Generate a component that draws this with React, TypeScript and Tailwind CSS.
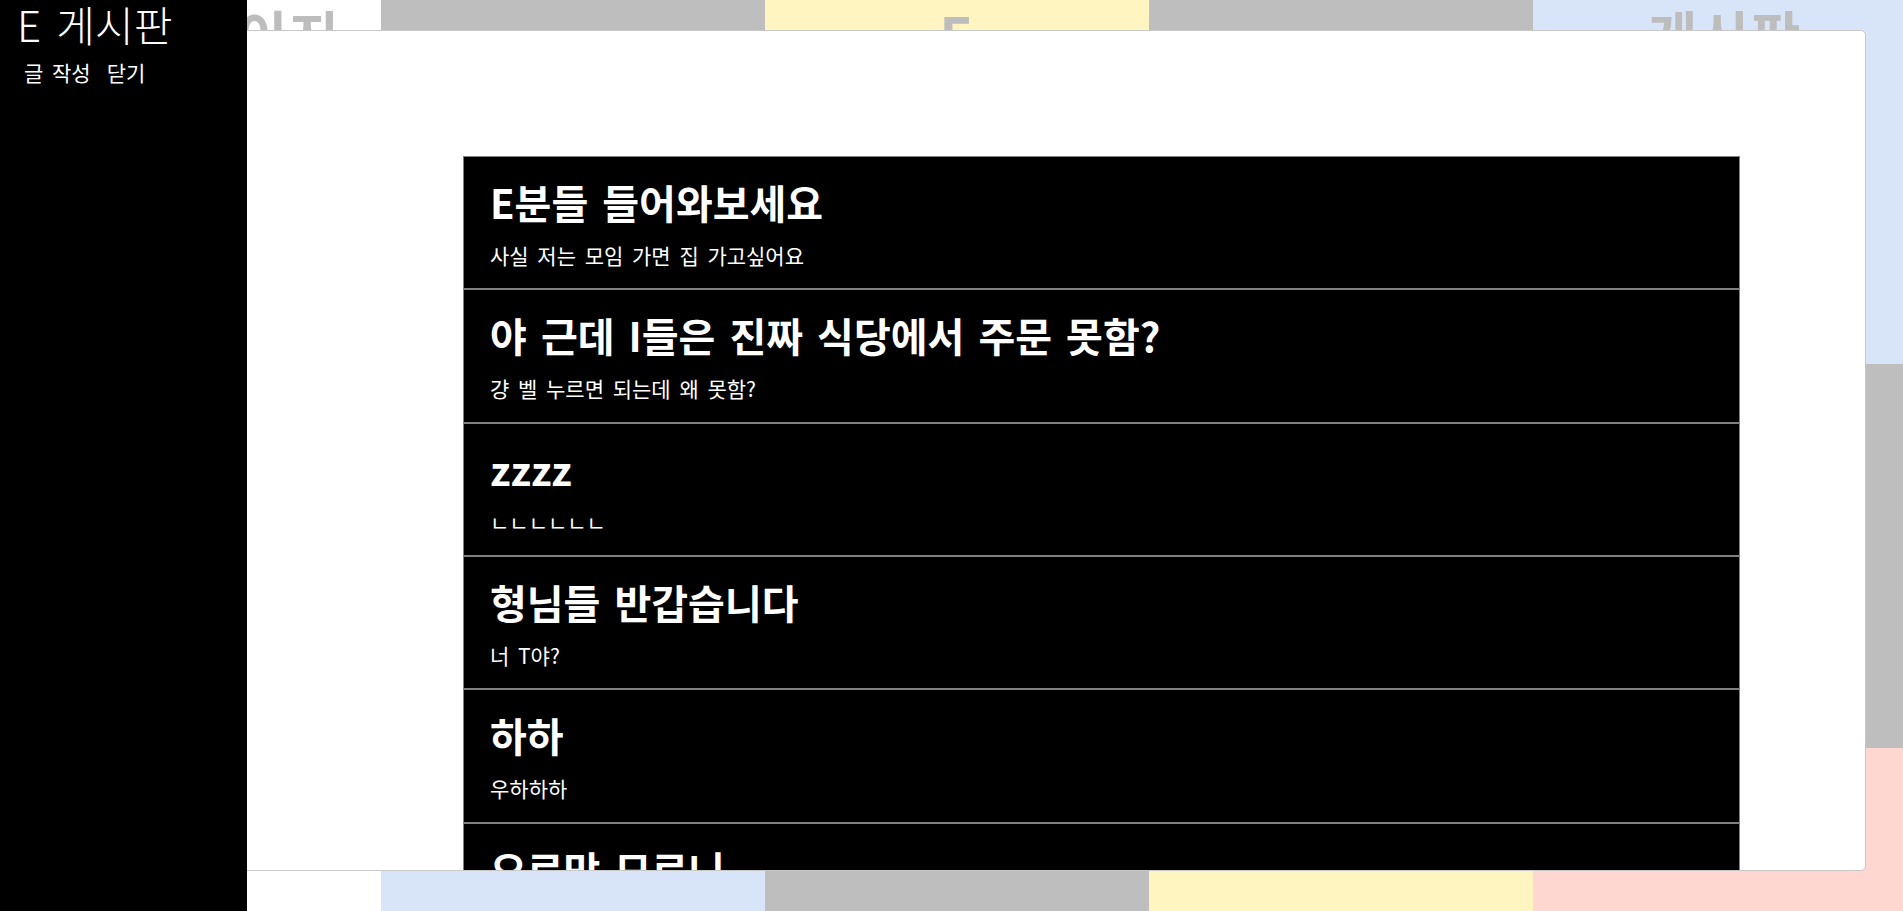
import React from 'react'

type Post = {
    title: string;
    body: string;
};

type Tile = {
    bg: string;
    label?: string;
    align?: string;
};

const posts: Post[] = [
    { title: "E분들 들어와보세요", body: "사실 저는 모임 가면 집 가고싶어요" },
    { title: "야 근데 I들은 진짜 식당에서 주문 못함?", body: "걍 벨 누르면 되는데 왜 못함?" },
    { title: "zzzz", body: "ㄴㄴㄴㄴㄴㄴ" },
    { title: "형님들 반갑습니다", body: "너 T야?" },
    { title: "하하", body: "우하하하" },
    { title: "오르막 모르니", body: "ㅋㅋㅋ" },
];

// background board tiles, row by row
const tiles: Tile[] = [
    { bg: "bg-white", label: "마이페이지", align: "justify-end pr-[40px]" },
    { bg: "bg-[#bebebe]" },
    { bg: "bg-[#fff5c1]", label: "E" },
    { bg: "bg-[#bebebe]" },
    { bg: "bg-[#d8e4f8]", label: "게시판" },

    { bg: "bg-white" },
    { bg: "bg-[#fdd7d0]" },
    { bg: "bg-[#d8e4f8]" },
    { bg: "bg-[#fff5c1]" },
    { bg: "bg-[#bebebe]" },

    { bg: "bg-white" },
    { bg: "bg-[#d8e4f8]" },
    { bg: "bg-[#bebebe]" },
    { bg: "bg-[#fff5c1]" },
    { bg: "bg-[#fdd7d0]" },
];

const PostRow = ({ title, body }: Post) => (
    <div className="border border-[#808080] bg-black pl-[26px] pt-[25px] pb-[22.33px]">
        <h2 className="text-[40px] font-bold leading-none text-white whitespace-nowrap [word-spacing:5px]">{title}</h2>
        <p className="mt-[23px] text-[21px] leading-none text-white whitespace-nowrap [word-spacing:4px]">{body}</p>
    </div>
)

const App = () => {
    return (
        <div className="relative h-[911px] w-full overflow-hidden bg-white font-['Noto_Sans_CJK_KR',sans-serif]">
            {/* BOARD BACKGROUND */}
            <div className="grid grid-cols-[381px_384px_384px_384px_384px] grid-rows-[364px_384px_384px]">
                {tiles.map((tile, idx) => (
                    <div key={idx} className={`flex pt-[7px] ${tile.bg} ${tile.align ?? "justify-center"}`}>
                        {tile.label && (
                            <span className="text-[54px] font-bold leading-none tracking-[2px] text-[#bdbdbd]">{tile.label}</span>
                        )}
                    </div>
                ))}
            </div>

            {/* MODAL */}
            <div className="absolute left-[37px] top-[30px] h-[841px] w-[1829px] overflow-hidden rounded-[5px] border border-[#c8c8c8] bg-white">
                <div className="ml-[425px] mt-[125px] w-[1277px]">
                    {posts.map((post, idx) => (
                        <PostRow key={idx} {...post} />
                    ))}
                </div>
            </div>

            {/* SIDEBAR */}
            <div className="absolute left-0 top-0 z-10 h-full w-[247px] bg-black pl-[17px] pt-[3px] text-white">
                <h1 className="text-[42px] font-light leading-none whitespace-nowrap [word-spacing:6px]">E 게시판</h1>
                <div className="mt-[17px] ml-[7px] flex text-[21px] leading-none">
                    <span className="[word-spacing:4px]">글 작성</span>
                    <span className="ml-4">닫기</span>
                </div>
            </div>
        </div>
    )
}

export default App
